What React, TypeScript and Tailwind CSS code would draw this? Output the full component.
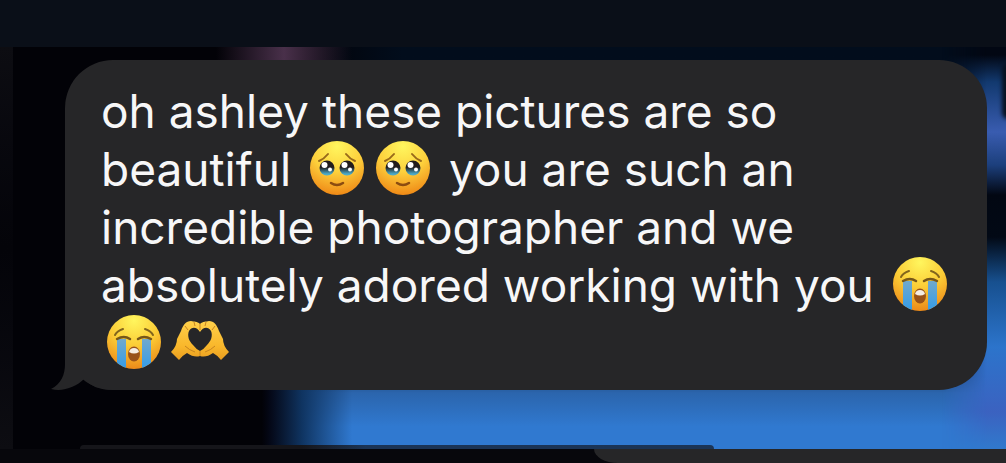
const HoldingTears = () => (
  <svg viewBox="0 0 56 56" role="img" aria-label="face holding back tears" className="inline-block w-14 h-14 mx-[5px] align-top">
    <defs>
      <radialGradient id="tearFace" cx="0.5" cy="0.1" r="0.95">
        <stop offset="0" stopColor="#fff65e"/>
        <stop offset="0.5" stopColor="#fdd03c"/>
        <stop offset="1" stopColor="#ed8112"/>
      </radialGradient>
      <linearGradient id="wetEye" x1="0" y1="0" x2="0" y2="1">
        <stop offset="0.45" stopColor="#211c1c"/>
        <stop offset="0.9" stopColor="#4cabc9"/>
      </linearGradient>
    </defs>
    <circle cx="28" cy="28" r="27" fill="url(#tearFace)"/>
    <path d="M10 21Q15 19 19 14M37 14Q41 19 46 21" fill="none" stroke="#98691a" strokeWidth="2" strokeLinecap="round"/>
    <g fill="url(#wetEye)">
      <circle cx="18" cy="28" r="7.5"/>
      <circle cx="38" cy="28" r="7.5"/>
    </g>
    <g fill="#fff">
      <circle cx="15.5" cy="25" r="3"/>
      <circle cx="35.5" cy="25" r="3"/>
      <circle cx="21" cy="29.5" r="2"/>
      <circle cx="41" cy="29.5" r="2"/>
    </g>
    <path d="M22 43Q28 47 34 43" fill="none" stroke="#8b4c11" strokeWidth="2.5" strokeLinecap="round"/>
  </svg>
);

const LoudlyCrying = () => (
  <svg viewBox="0 0 56 56" role="img" aria-label="loudly crying face" className="inline-block w-14 h-14 mx-[5px] align-top">
    <defs>
      <radialGradient id="cryFace" cx="0.5" cy="0.1" r="0.95">
        <stop offset="0" stopColor="#fff65e"/>
        <stop offset="0.5" stopColor="#fbcb35"/>
        <stop offset="1" stopColor="#ea8216"/>
      </radialGradient>
      <linearGradient id="tears" x1="0" y1="0" x2="0" y2="1">
        <stop offset="0" stopColor="#70a9cd"/>
        <stop offset="1" stopColor="#329be8"/>
      </linearGradient>
      <clipPath id="cryClip"><circle cx="28" cy="28" r="27"/></clipPath>
    </defs>
    <circle cx="28" cy="28" r="27" fill="url(#cryFace)"/>
    <g clipPath="url(#cryClip)" fill="url(#tears)">
      <path d="M11 25H20V56H11ZM36 25H45V56H36Z"/>
    </g>
    <path d="M9 21Q11 17 17 15M39 15Q45 17 47 21" fill="none" stroke="#82651d" strokeWidth="2" strokeLinecap="round"/>
    <path d="M11 25Q18 21 24 25M32 25Q38 21 45 25" fill="none" stroke="#765719" strokeWidth="2.5" strokeLinecap="round"/>
    <ellipse cx="28" cy="40" rx="6" ry="7.5" fill="#98521a"/>
    <path d="M23 38Q24 34 28 34Q32 34 33 38Q28 41 23 38Z" fill="#f5ede3"/>
  </svg>
);

const HeartHands = () => (
  <svg viewBox="0 0 60 56" role="img" aria-label="heart hands" className="inline-block w-15 h-14 mx-[3px] align-top">
    <defs>
      <linearGradient id="hands" x1="0" y1="0" x2="0" y2="1">
        <stop offset="0" stopColor="#ffd04a"/>
        <stop offset="0.65" stopColor="#f9b72b"/>
        <stop offset="1" stopColor="#e99d20"/>
      </linearGradient>
    </defs>
    <g fill="url(#hands)">
      <path d="M30 10C27 7 24 8 21 7C16 7 13 11 11 17L7 25Q7 32 1 38L9 46Q13 41 17 39Q24 44 30 42V37Q26 35 23 31C19 27 17 22 19 17C22 12 27 13 30 18Z"/>
      <path d="M30 10C33 7 36 8 39 7C44 7 47 11 49 17L53 25Q53 32 59 38L51 46Q47 41 43 39Q36 44 30 42V37Q34 35 37 31C41 27 43 22 41 17C38 12 33 13 30 18Z"/>
    </g>
    <path d="M30 10V16M30 37V42M24 8L25 12M36 8L35 12M15 12L18 16M45 12L42 16M15 32Q19 36 25 38M45 32Q41 36 35 38" stroke="#c68420" strokeWidth="1" fill="none"/>
  </svg>
);

const BubbleTail = () => (
  <svg viewBox="0 0 64 48" aria-hidden="true" className="absolute -left-4 bottom-0 w-16 h-12">
    <path d="M16 0V22C16 33 12 42 2 47C14 50 27 45 35 37C42 44 50 48 64 48V0Z" fill="#262628"/>
  </svg>
);

// Blurred photo behind the conversation
const Wallpaper = () => (
  <div className="absolute inset-0 overflow-hidden bg-[#020207]">
    <div className="absolute top-0 inset-x-0 h-10 bg-linear-to-r from-transparent from-30% to-[#020d1c] to-40%"/>
    <div className="absolute top-0 left-54 w-34 h-4 bg-linear-to-r from-transparent via-[#49304a] to-transparent"/>
    <div className="absolute bottom-0 inset-x-0 h-28 bg-linear-to-b from-[#2b65ad] from-50% to-[#3079d0] to-80% [mask-image:linear-gradient(to_bottom,transparent,black_50%)]"/>
    <div className="absolute bottom-0 inset-x-0 h-28 bg-linear-to-r from-[#020207] from-26% via-[#0f3461] via-30% to-transparent to-35%"/>
    <div className="absolute inset-y-0 right-0 w-16 bg-[linear-gradient(to_bottom,#020713_8px,#12396f_35px,#395cb0_85px,#1c3f7c_118px,#020712_148px,#020915_190px,#17508f_235px,#2c74cb_300px,#3b62c0_365px,#3178cc_400px)] [mask-image:linear-gradient(to_left,black_30%,transparent)]"/>
    <div className="absolute top-4 -right-2 w-3 h-14 rounded-full bg-[#06101f] blur-[2px]"/>
    <div className="absolute inset-y-0 left-0 w-[13px] bg-linear-to-b from-[#0d0d12] via-[#040409] to-[#0d0d12]"/>
  </div>
);

const ChatBubble = () => (
  <div className="relative ml-[65px] mr-[19px] mt-[13px] rounded-[48px] bg-[#262628] pl-9 pr-6 pt-[22px] pb-[18px]">
    <BubbleTail/>
    <p className="relative text-[46px] leading-[58px] text-[#f7f7f8]">
      oh ashley these pictures are so<br/>
      beautiful <HoldingTears/><HoldingTears/> you are such an<br/>
      incredible photographer and we<br/>
      absolutely adored working with you <LoudlyCrying/><br/>
      <LoudlyCrying/><HeartHands/>
    </p>
  </div>
);

// Top edge of the next messages, cut off by the window
const NextMessages = () => (
  <footer className="relative flex h-[14px] shrink-0 bg-[#07070c]">
    <div className="absolute -top-1 left-20 right-[29%] h-1 rounded-t-full bg-linear-to-r from-[#15151a] from-35% to-[#1b3455] to-45%"/>
    <div className="w-[59%]"/>
    <div className="flex-1 rounded-bl-[24px_14px] bg-[#262628]"/>
  </footer>
);

export default function App() {
  return (
    <main className="flex flex-col min-h-screen overflow-hidden bg-[#0a0f18] font-[Inter,sans-serif]">
      <header className="h-[47px] shrink-0"/>
      <section className="relative flex-1 pb-[59px]">
        <Wallpaper/>
        <ChatBubble/>
      </section>
      <NextMessages/>
    </main>
  );
}
